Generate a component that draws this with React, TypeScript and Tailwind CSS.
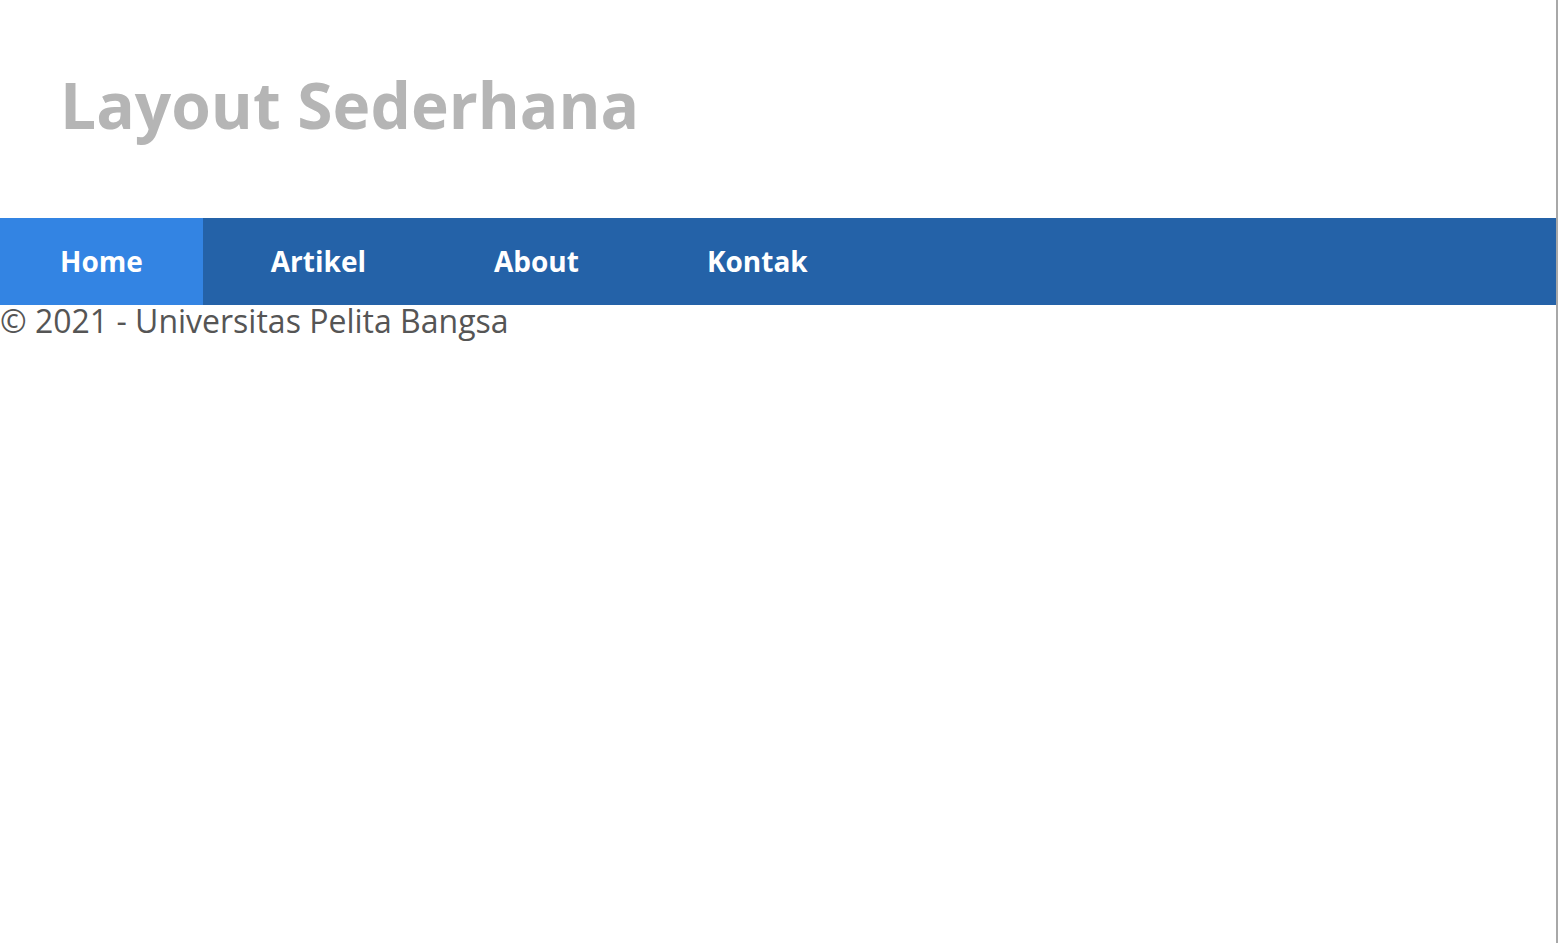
import React from "react";

const menu = ["Home", "Artikel", "About", "Kontak"];

const App = () => {
  return (
    <div
      className="min-h-[943px] w-[1558px] border-r-2 border-[#a8a8a8] bg-white"
      style={{ fontFamily: '"Open Sans", "Liberation Sans", sans-serif' }}
    >
      <div className="w-[1556px]">
        {/* header */}
        <header className="h-[218px] pl-[60px] pt-[73px]">
          <h1 className="text-[64px] font-bold leading-none text-[#b5b5b5]">
            Layout Sederhana
          </h1>
        </header>

        {/* nav */}
        <nav className="flex h-[87px] gap-[8px] bg-[#2462a8]">
          {menu.map((item, i) => (
            <a
              key={item}
              href="#"
              className={`flex h-full items-center px-[60px] pb-[2px] text-[28px] font-bold text-white ${
                i === 0 ? "bg-[#3384e3]" : ""
              }`}
            >
              {item}
            </a>
          ))}
        </nav>

        {/* footer */}
        <footer className="text-[32px] leading-none text-[#555555]">
          © 2021 - Universitas Pelita Bangsa
        </footer>
      </div>
    </div>
  );
};

export default App;
